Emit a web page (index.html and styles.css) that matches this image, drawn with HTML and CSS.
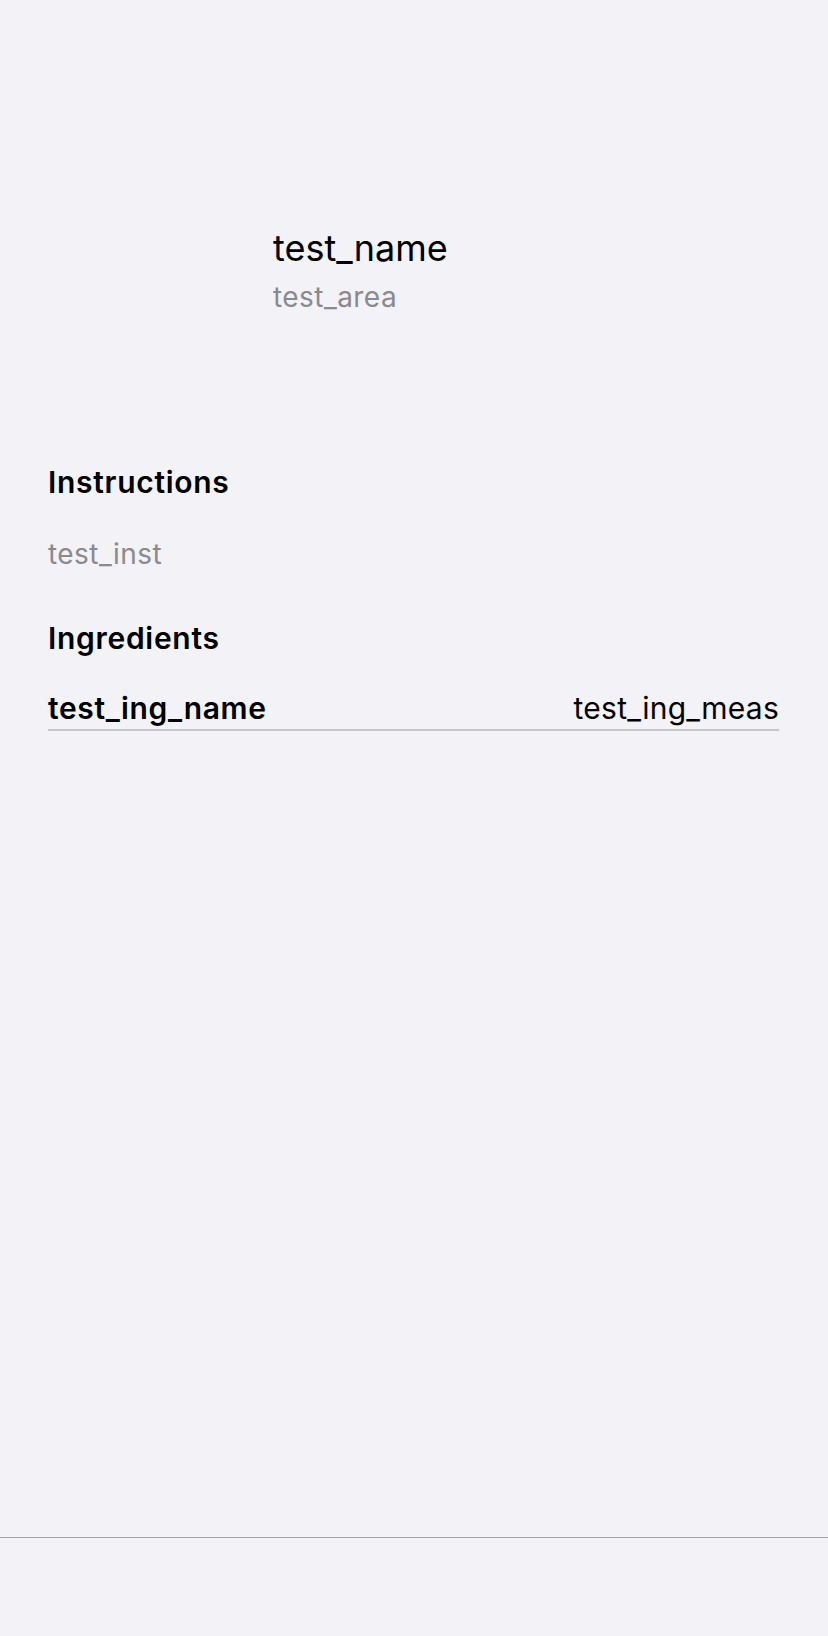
FILE: index.html
```html
<!DOCTYPE html>
<html lang="en">
<head>
<meta charset="utf-8">
<title>Meal detail</title>
<link rel="stylesheet" href="styles.css">
</head>
<body>
<div class="screen">
  <main class="main">
    <section class="header">
      <div class="thumb"></div>
      <div class="titles">
        <div class="title">test_name</div>
        <div class="subtitle">test_area</div>
      </div>
    </section>
    <section class="content">
      <h2 class="section-title">Instructions</h2>
      <p class="body-text">test_inst</p>
      <h2 class="section-title ingredients-title">Ingredients</h2>
      <div class="ing-row">
        <span class="ing-name">test_ing_name</span>
        <span class="ing-meas">test_ing_meas</span>
      </div>
    </section>
  </main>
  <footer class="tabbar"></footer>
</div>
</body>
</html>
```
FILE: styles.css
```css
html, body {
  margin: 0;
  padding: 0;
  background: #f2f2f7;
}
body {
  font-family: Inter, "Noto Sans", sans-serif;
  color: #000;
}
.screen {
  display: flex;
  flex-direction: column;
  height: 1636px;
}
.main {
  flex: 1;
}
.header {
  display: flex;
  padding-top: 226px;
  padding-left: 273px;
}
.thumb {
  width: 0;
}
.titles {
  display: flex;
  flex-direction: column;
  gap: 10px;
}
.title {
  font-size: 36px;
  line-height: 44px;
  font-weight: 400;
}
.subtitle {
  font-size: 28px;
  line-height: 34px;
  letter-spacing: 0.45px;
  color: #8a8a8e;
}
.content {
  padding: 0 49px 0 48px;
  margin-top: 150px;
}
.section-title {
  margin: 0;
  font-size: 30px;
  line-height: 36px;
  font-weight: 600;
  letter-spacing: 0.7px;
}
.body-text {
  margin: 37px 0 0;
  font-size: 28px;
  line-height: 34px;
  letter-spacing: 0.45px;
  color: #8a8a8e;
}
.ingredients-title {
  margin-top: 49px;
}
.ing-row {
  margin-top: 34px;
  display: flex;
  justify-content: space-between;
  align-items: baseline;
  font-size: 30px;
  line-height: 36px;
  padding-bottom: 3px;
  border-bottom: 2px solid #c6c6c8;
}
.ing-name {
  font-weight: 600;
  letter-spacing: 0.65px;
}
.ing-meas {
  font-weight: 400;
  letter-spacing: 0.25px;
}
.tabbar {
  height: 98px;
  border-top: 1px solid #a3a3a8;
}
```
